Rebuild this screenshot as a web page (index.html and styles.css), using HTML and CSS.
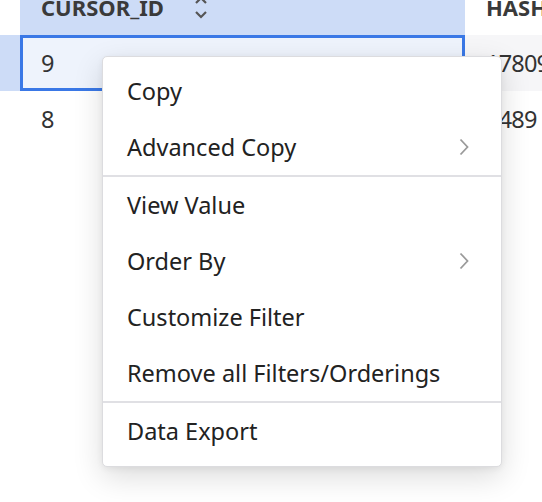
FILE: index.html
```html
<!DOCTYPE html>
<html>
<head>
<meta charset="utf-8">
<link rel="stylesheet" href="styles.css">
</head>
<body>
<div class="grid">
  <div class="row head">
    <div class="gutter"></div>
    <div class="cell c1 hcell">
      <span class="hlabel">CURSOR_ID</span>
      <svg class="sort" width="14" height="22" viewBox="0 0 14 22">
        <polyline points="2,3 7,-2 12,3" fill="none" stroke="#555" stroke-width="2.2"/>
        <polyline points="2,12 7,17 12,12" fill="none" stroke="#555" stroke-width="2.2"/>
      </svg>
    </div>
    <div class="cell c2 hcell"><span class="hlabel">HASH</span></div>
  </div>
  <div class="row sel">
    <div class="gutter"></div>
    <div class="cell c1 active">9</div>
    <div class="cell c2 num">17809</div>
  </div>
  <div class="row">
    <div class="gutter"></div>
    <div class="cell c1">8</div>
    <div class="cell c2 num">2489</div>
  </div>
</div>

<div class="menu">
  <div class="item">Copy</div>
  <div class="item">Advanced Copy
    <svg class="chev" width="10" height="18" viewBox="0 0 10 18"><polyline points="1.5,1.5 8.5,9 1.5,16.5" fill="none" stroke="#9a9a9a" stroke-width="1.8"/></svg>
  </div>
  <div class="divider"></div>
  <div class="item">View Value</div>
  <div class="item">Order By
    <svg class="chev" width="10" height="18" viewBox="0 0 10 18"><polyline points="1.5,1.5 8.5,9 1.5,16.5" fill="none" stroke="#9a9a9a" stroke-width="1.8"/></svg>
  </div>
  <div class="item">Customize Filter</div>
  <div class="item">Remove all Filters/Orderings</div>
  <div class="divider"></div>
  <div class="item">Data Export</div>
</div>
</body>
</html>
```

FILE: styles.css
```css
html, body {
  margin: 0;
  padding: 0;
  background: #ffffff;
  font-family: "Noto Sans", Lato, sans-serif;
  overflow: hidden;
}
body {
  width: 542px;
  height: 502px;
  position: relative;
}
.grid {
  display: flex;
  flex-direction: column;
}
.row {
  display: flex;
  height: 56px;
}
.row.head {
  height: 35px;
  overflow: hidden;
}
.gutter {
  width: 20px;
  flex: none;
}
.sel .gutter {
  background: #cddcf7;
}
.cell {
  box-sizing: border-box;
  display: flex;
  align-items: center;
  font-size: 23.5px;
  color: #333;
  white-space: nowrap;
  overflow: hidden;
}
.c1 {
  width: 445px;
  flex: none;
  padding-left: 21px;
}
.c2 {
  flex: 1;
  padding-left: 21px;
}
.num {
  letter-spacing: -0.8px;
}
.sel .c2 {
  background: #f6f6f8;
}
.active {
  border: 3px solid #3a78e6;
  background: #eef3fc;
  padding-left: 18px;
}
.hcell {
  align-items: flex-start;
}
.head .c1 {
  background: #cddcf7;
}
.hlabel {
  font-weight: 700;
  font-size: 22px;
  line-height: 22px;
  margin-top: -4.5px;
  color: #3a3a3a;
}
.sort {
  margin-left: 30px;
  flex: none;
}
.menu {
  position: absolute;
  left: 102px;
  top: 56px;
  width: 400px;
  box-sizing: border-box;
  background: #fff;
  border: 1px solid #dcdcdf;
  border-radius: 5px;
  padding: 6px 0 7px;
  box-shadow: 0 10px 30px rgba(0, 0, 0, 0.14), 0 2px 6px rgba(0, 0, 0, 0.06);
}
.item {
  height: 56px;
  display: flex;
  align-items: center;
  justify-content: space-between;
  padding: 0 32px 0 24px;
  font-size: 23.5px;
  color: #222;
  white-space: nowrap;
}
.chev {
  flex: none;
}
.divider {
  height: 2px;
  background: #e0e0e4;
}
```
